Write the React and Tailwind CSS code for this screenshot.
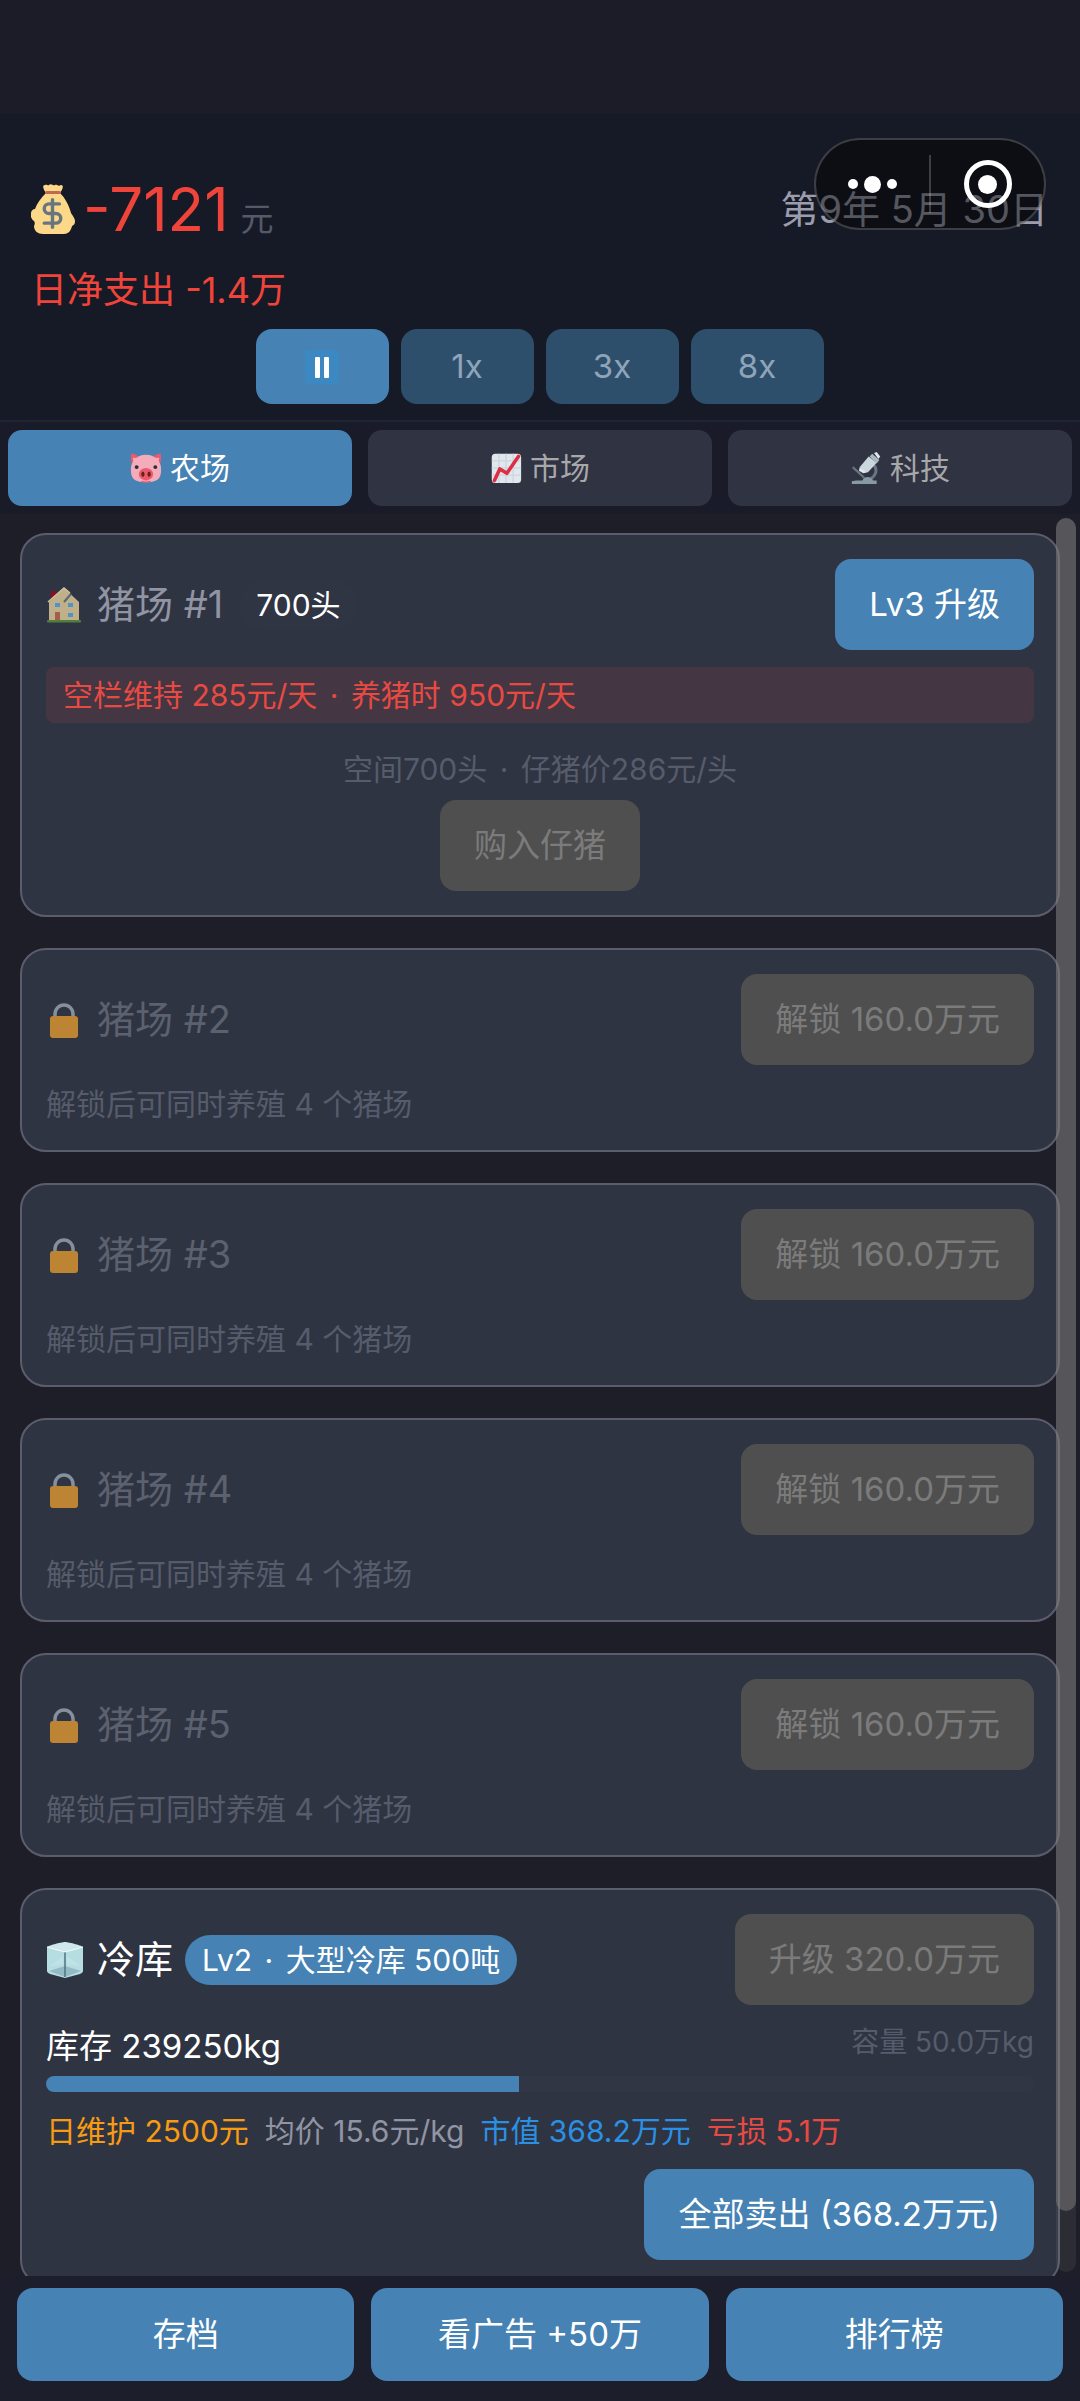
import { useState } from 'react';
import { DollarSign } from 'lucide-react';

const MoneyBag = () => (
  <svg viewBox="0 0 44 50" className="w-11 h-[50px] shrink-0" aria-hidden="true">
    <path
      fill="#fdd888"
      d="M15 9C12 5 11 1 14 1c2-1 3 1 4 0s2-1 4 0 2-1 4 0 2 1 4 0c3 0 2 4-1 8 5 5 9 12 11 20 1 2 4 5 4 8s-1 4-3 5c-1 5-4 8-8 8H12c-5 0-9-3-9-8 1-2 1-4 0-5-3-2-4-6-3-8 0-2 2-4 4-4C6 19 10 14 15 9z"
    />
    <rect x="14" y="7" width="16" height="3" rx="1.5" fill="#bf6952" />
    <DollarSign x={5} y={13} width={33} height={33} color="#67757f" strokeWidth={2.5} />
  </svg>
);

const PauseIcon = () => (
  <svg viewBox="0 0 36 36" className="size-9" aria-hidden="true">
    <rect x="1" y="1" width="34" height="34" rx="4" fill="#3b88c3" />
    <rect x="11" y="8" width="5" height="21" rx="1" fill="#fff" />
    <rect x="20" y="8" width="5" height="21" rx="1" fill="#fff" />
  </svg>
);

const PigIcon = () => (
  <svg viewBox="0 0 36 36" className="size-8" aria-hidden="true">
    <path fill="#ea596e" d="M1 9c0-6 0-8 2-7 3 0 7 3 9 6l-9 8zM35 9c0-6 0-8-2-7-3 0-7 3-9 6l9 8z" />
    <path fill="#f4abba" d="M18 3c10 0 17 7 17 16s-2 15-17 15S1 28 1 19 8 3 18 3z" />
    <path fill="#f4abba" d="M3 7c2-1 6 0 8 2l-6 6zM33 7c-2-1-6 0-8 2l6 6z" />
    <circle cx="7.5" cy="17" r="2.2" fill="#292f33" />
    <circle cx="28.5" cy="17" r="2.2" fill="#292f33" />
    <ellipse cx="18" cy="25" rx="8" ry="7" fill="#ea596e" />
    <ellipse cx="14.5" cy="25" rx="1.8" ry="3" fill="#662113" />
    <ellipse cx="21.5" cy="25" rx="1.8" ry="3" fill="#662113" />
    <path d="M13 33c3 1 7 1 10 0" stroke="#ea596e" strokeWidth="1.5" fill="none" />
  </svg>
);

const ChartIcon = () => (
  <svg viewBox="0 0 36 36" className="size-8" aria-hidden="true">
    <rect x="2" y="2" width="33" height="33" rx="4" fill="#e1e8ed" />
    <path d="M2 10h33M2 18h33M2 26h33M10 2v33M18 2v33M26 2v33" stroke="#ccd6dd" strokeWidth="1.5" />
    <path d="M5 32l6-13 8 5L32 5" stroke="#dd2e44" strokeWidth="4" strokeLinecap="round" strokeLinejoin="round" fill="none" />
  </svg>
);

const MicroscopeIcon = () => (
  <svg viewBox="0 0 36 36" className="size-8" aria-hidden="true">
    <path d="M3 17l13 12" stroke="#66757f" strokeWidth="2.5" />
    <path d="M26 14c6 6 3 13-4 17" stroke="#66757f" strokeWidth="3.5" fill="none" />
    <path d="M2 36v-3l5-1h7c2-5 9-5 12 0h4v4H2z" fill="#8899a6" />
    <path d="M11 17L21 5l9 7-10 11-4-1z" fill="#ccd6dd" />
    <path d="M11 17l-1 4 5 3 4-1z" fill="#e1e8ed" />
    <path d="M22 5l3-3 8 7-3 4z" fill="#aab8c2" />
    <path d="M27 1l3-1 4 5-2 3z" fill="#e1e8ed" />
  </svg>
);

const HouseIcon = () => (
  <svg viewBox="0 0 36 36" className="size-9 opacity-80" aria-hidden="true">
    <path fill="#a0041e" d="M5 4h5v9H5z" />
    <path fill="#e3cf9c" d="M3 15L18 1l15 14v18H3z" />
    <path d="M2 15L18 1l6 5" stroke="#ffe8b6" strokeWidth="1.5" fill="none" />
    <path d="M18 15l7-8" stroke="#66757f" strokeWidth="2" />
    <path fill="#55acee" d="M9 16h5v4H9zM22 16h5v4h-5zM22 26h5v4h-5z" />
    <path fill="#c1694f" d="M9 25h5v8H9z" />
    <rect x="1" y="33" width="34" height="2.5" rx="1" fill="#5c913b" />
  </svg>
);

const LockIcon = () => (
  <svg viewBox="0 0 36 36" className="size-9 opacity-70" aria-hidden="true">
    <path d="M9 18v-6a9 9 0 0118 0v6" stroke="#aab8c2" strokeWidth="3.5" fill="none" />
    <rect x="4" y="14" width="28" height="22" rx="3" fill="#f9a62f" />
  </svg>
);

const IceIcon = () => (
  <svg viewBox="0 0 38 36" className="w-[38px] h-9" aria-hidden="true">
    <path fill="#b6dde2" d="M1 5l18 5v26L4 32c-2-1-3-2-3-3zM37 5l-18 5v26l15-4c2-1 3-2 3-3z" />
    <path fill="#cde9ec" d="M1 5c0-1 14-5 18-5s18 4 18 5-14 5-18 5S1 6 1 5z" />
    <path fill="#86adb9" d="M3 29l16-5 16 5-16 6z" opacity=".7" />
    <path fill="#c9e7ea" d="M3 24l14-10v9zM35 24L21 14v9z" opacity=".5" />
    <path d="M19 10v25" stroke="#4e7380" strokeWidth="1.5" />
    <path d="M1 5l18 5 18-5" stroke="#eefafa" strokeWidth="1" fill="none" />
  </svg>
);

const Button = ({ children, disabled, className = 'h-[91px]' }) => (
  <button
    disabled={disabled}
    className={`px-[34px] rounded-2xl text-[33px] whitespace-nowrap ${
      disabled ? 'bg-[#4f4f4f] text-[#7b7b7b]' : 'bg-[#4682b4] text-white'
    } ${className}`}
  >
    {children}
  </button>
);

const Card = ({ children }) => (
  <section className="shrink-0 bg-[#2f3442] border-2 border-[#5b5d6c] rounded-[26px] p-6">
    {children}
  </section>
);

const CardHead = ({ icon, title, badge, action }) => (
  <div className="flex items-center justify-between">
    <div className="flex items-center">
      <span className="w-[51px] flex">{icon}</span>
      {title}
      {badge}
    </div>
    {action}
  </div>
);

const Dot = () => <span className="mx-1">·</span>;

const speeds = ['1x', '3x', '8x'];

const tabs = [
  { id: 'farm', label: '农场', icon: <PigIcon /> },
  { id: 'market', label: '市场', icon: <ChartIcon /> },
  { id: 'tech', label: '科技', icon: <MicroscopeIcon /> },
];

const lockedFarms = [2, 3, 4, 5];

const storage = { stock: 239250, capacity: 500000 };

const App = () => {
  const [speed, setSpeed] = useState('pause');
  const [tab, setTab] = useState('farm');

  const speedClass = (active) =>
    `w-[133px] h-[75px] rounded-2xl flex items-center justify-center text-[33px] ${
      active ? 'bg-[#4682b4] text-white' : 'bg-[#2d4f6c] text-[#8fa4b8]'
    }`;

  return (
    <div className="relative h-screen flex flex-col bg-[#1e1e28] text-white font-['Inter','Noto_Sans_CJK_SC',sans-serif]">
      {/* Status bar area */}
      <div className="h-[114px] shrink-0 bg-[#1b1c28]"></div>

      {/* Header */}
      <header className="shrink-0 bg-[#161a26] border-b-2 border-[#202533] pl-[31px] pr-8 pt-14 pb-4">
        <div className="h-[78px] flex items-center justify-between">
          <div className="flex items-center gap-2">
            <MoneyBag />
            <div className="flex items-baseline gap-3">
              <span className="text-[60px] leading-[78px] text-[#f0443a]">-7121</span>
              <span className="text-[33px] text-[#555a68]">元</span>
            </div>
          </div>
          <div className="text-[38px] text-[#9b9dac]">第9年 5月 30日</div>
        </div>
        <div className="mt-[18px] h-12 leading-[48px] text-[36px] text-[#f0443a]">日净支出 -1.4万</div>
        <div className="mt-[15px] flex justify-center gap-3">
          <button aria-label="暂停" onClick={() => setSpeed('pause')} className={speedClass(speed === 'pause')}>
            <PauseIcon />
          </button>
          {speeds.map((s) => (
            <button key={s} onClick={() => setSpeed(s)} className={speedClass(speed === s)}>
              {s}
            </button>
          ))}
        </div>
      </header>

      {/* Mini program capsule */}
      <div className="absolute top-[138px] right-[34px] w-[232px] h-[92px] rounded-full bg-black/45 border-2 border-white/20 flex items-center">
        <button aria-label="更多" className="flex-1 flex items-center justify-center gap-[6px]">
          <span className="size-[10px] rounded-full bg-white"></span>
          <span className="size-[17px] rounded-full bg-white"></span>
          <span className="size-[10px] rounded-full bg-white"></span>
        </button>
        <span className="w-[2px] h-[58px] bg-white/20"></span>
        <button aria-label="关闭" className="flex-1 flex items-center justify-center">
          <span className="size-12 rounded-full border-[5px] border-white flex items-center justify-center">
            <span className="size-[19px] rounded-full bg-white"></span>
          </span>
        </button>
      </div>

      {/* Tabs */}
      <nav className="shrink-0 bg-[#191c28] p-2 flex gap-4">
        {tabs.map((t) => (
          <button
            key={t.id}
            onClick={() => setTab(t.id)}
            className={`flex-1 h-[76px] rounded-[14px] flex items-center justify-center gap-2 text-[30px] ${
              tab === t.id ? 'bg-[#4682b4] text-white' : 'bg-[#303342] text-[#a8a8ab]'
            }`}
          >
            {t.icon}
            {t.label}
          </button>
        ))}
      </nav>

      <div className="relative flex-1 min-h-0">
        <main className="h-full overflow-y-auto [scrollbar-width:none] px-5 pt-[19px] pb-8 flex flex-col gap-[31px]">
          <Card>
            <CardHead
              icon={<HouseIcon />}
              title={<h2 className="text-[38px] text-[#9194a3]">猪场 #1</h2>}
              badge={<span className="ml-4 h-[50px] px-[17px] rounded-full bg-[#303544] text-[30px] leading-[50px]">700头</span>}
              action={<Button>Lv3 升级</Button>}
            />
            <p className="mt-[17px] h-14 px-[17px] rounded-lg bg-[#443642] text-[30px] leading-[56px] text-[#e84a42]">
              空栏维持 285元/天 <Dot /> 养猪时 950元/天
            </p>
            <div className="mt-6 flex flex-col items-center gap-[9px]">
              <p className="text-[30px] leading-[44px] text-[#565c6b]">
                空间700头 <Dot /> 仔猪价286元/头
              </p>
              <Button disabled>购入仔猪</Button>
            </div>
          </Card>

          {lockedFarms.map((n) => (
            <Card key={n}>
              <CardHead
                icon={<LockIcon />}
                title={<h2 className="text-[38px] text-[#5c6170]">猪场 #{n}</h2>}
                action={<Button disabled>解锁 160.0万元</Button>}
              />
              <p className="mt-[17px] text-[30px] leading-[44px] text-[#565c6b]">解锁后可同时养殖 4 个猪场</p>
            </Card>
          ))}

          {/* Cold storage */}
          <Card>
            <CardHead
              icon={<IceIcon />}
              title={<h2 className="text-[38px]">冷库</h2>}
              badge={
                <span className="ml-3 h-[50px] px-[17px] rounded-full bg-[#4682b4] text-[30px] leading-[50px]">
                  Lv2 <Dot /> 大型冷库 500吨
                </span>
              }
              action={<Button disabled>升级 320.0万元</Button>}
            />
            <div className="mt-[17px] h-[54px] flex justify-between">
              <span className="text-[33px] leading-[48px]">库存 {storage.stock}kg</span>
              <span className="text-[28px] leading-[40px] text-[#565c6b]">容量 50.0万kg</span>
            </div>
            <div className="h-4 rounded-lg bg-[#313644] overflow-hidden">
              <div className="h-full bg-[#4682b4]" style={{ width: `${(storage.stock / storage.capacity) * 100}%` }}></div>
            </div>
            <div className="mt-[17px] flex gap-4 text-[30px] leading-[44px]">
              <span className="text-[#f79b12]">日维护 2500元</span>
              <span className="text-[#9194a3]">均价 15.6元/kg</span>
              <span className="text-[#2b90e4]">市值 368.2万元</span>
              <span className="text-[#e84a42]">亏损 5.1万</span>
            </div>
            <div className="mt-4 flex justify-end">
              <Button>全部卖出 (368.2万元)</Button>
            </div>
          </Card>
        </main>

        {/* Scroll indicator */}
        <div className="absolute top-1 bottom-1 right-1 w-5 rounded-full bg-[#808080]/15 pointer-events-none">
          <div className="h-[96.5%] rounded-full bg-[#808080]/50"></div>
        </div>
      </div>

      {/* Bottom actions */}
      <footer className="shrink-0 bg-[#1d1e2b] px-[17px] pt-3 pb-5 flex gap-[17px]">
        <Button className="flex-1 h-[93px]">存档</Button>
        <Button className="flex-1 h-[93px]">看广告 +50万</Button>
        <Button className="flex-1 h-[93px]">排行榜</Button>
      </footer>
    </div>
  );
};

export default App;
